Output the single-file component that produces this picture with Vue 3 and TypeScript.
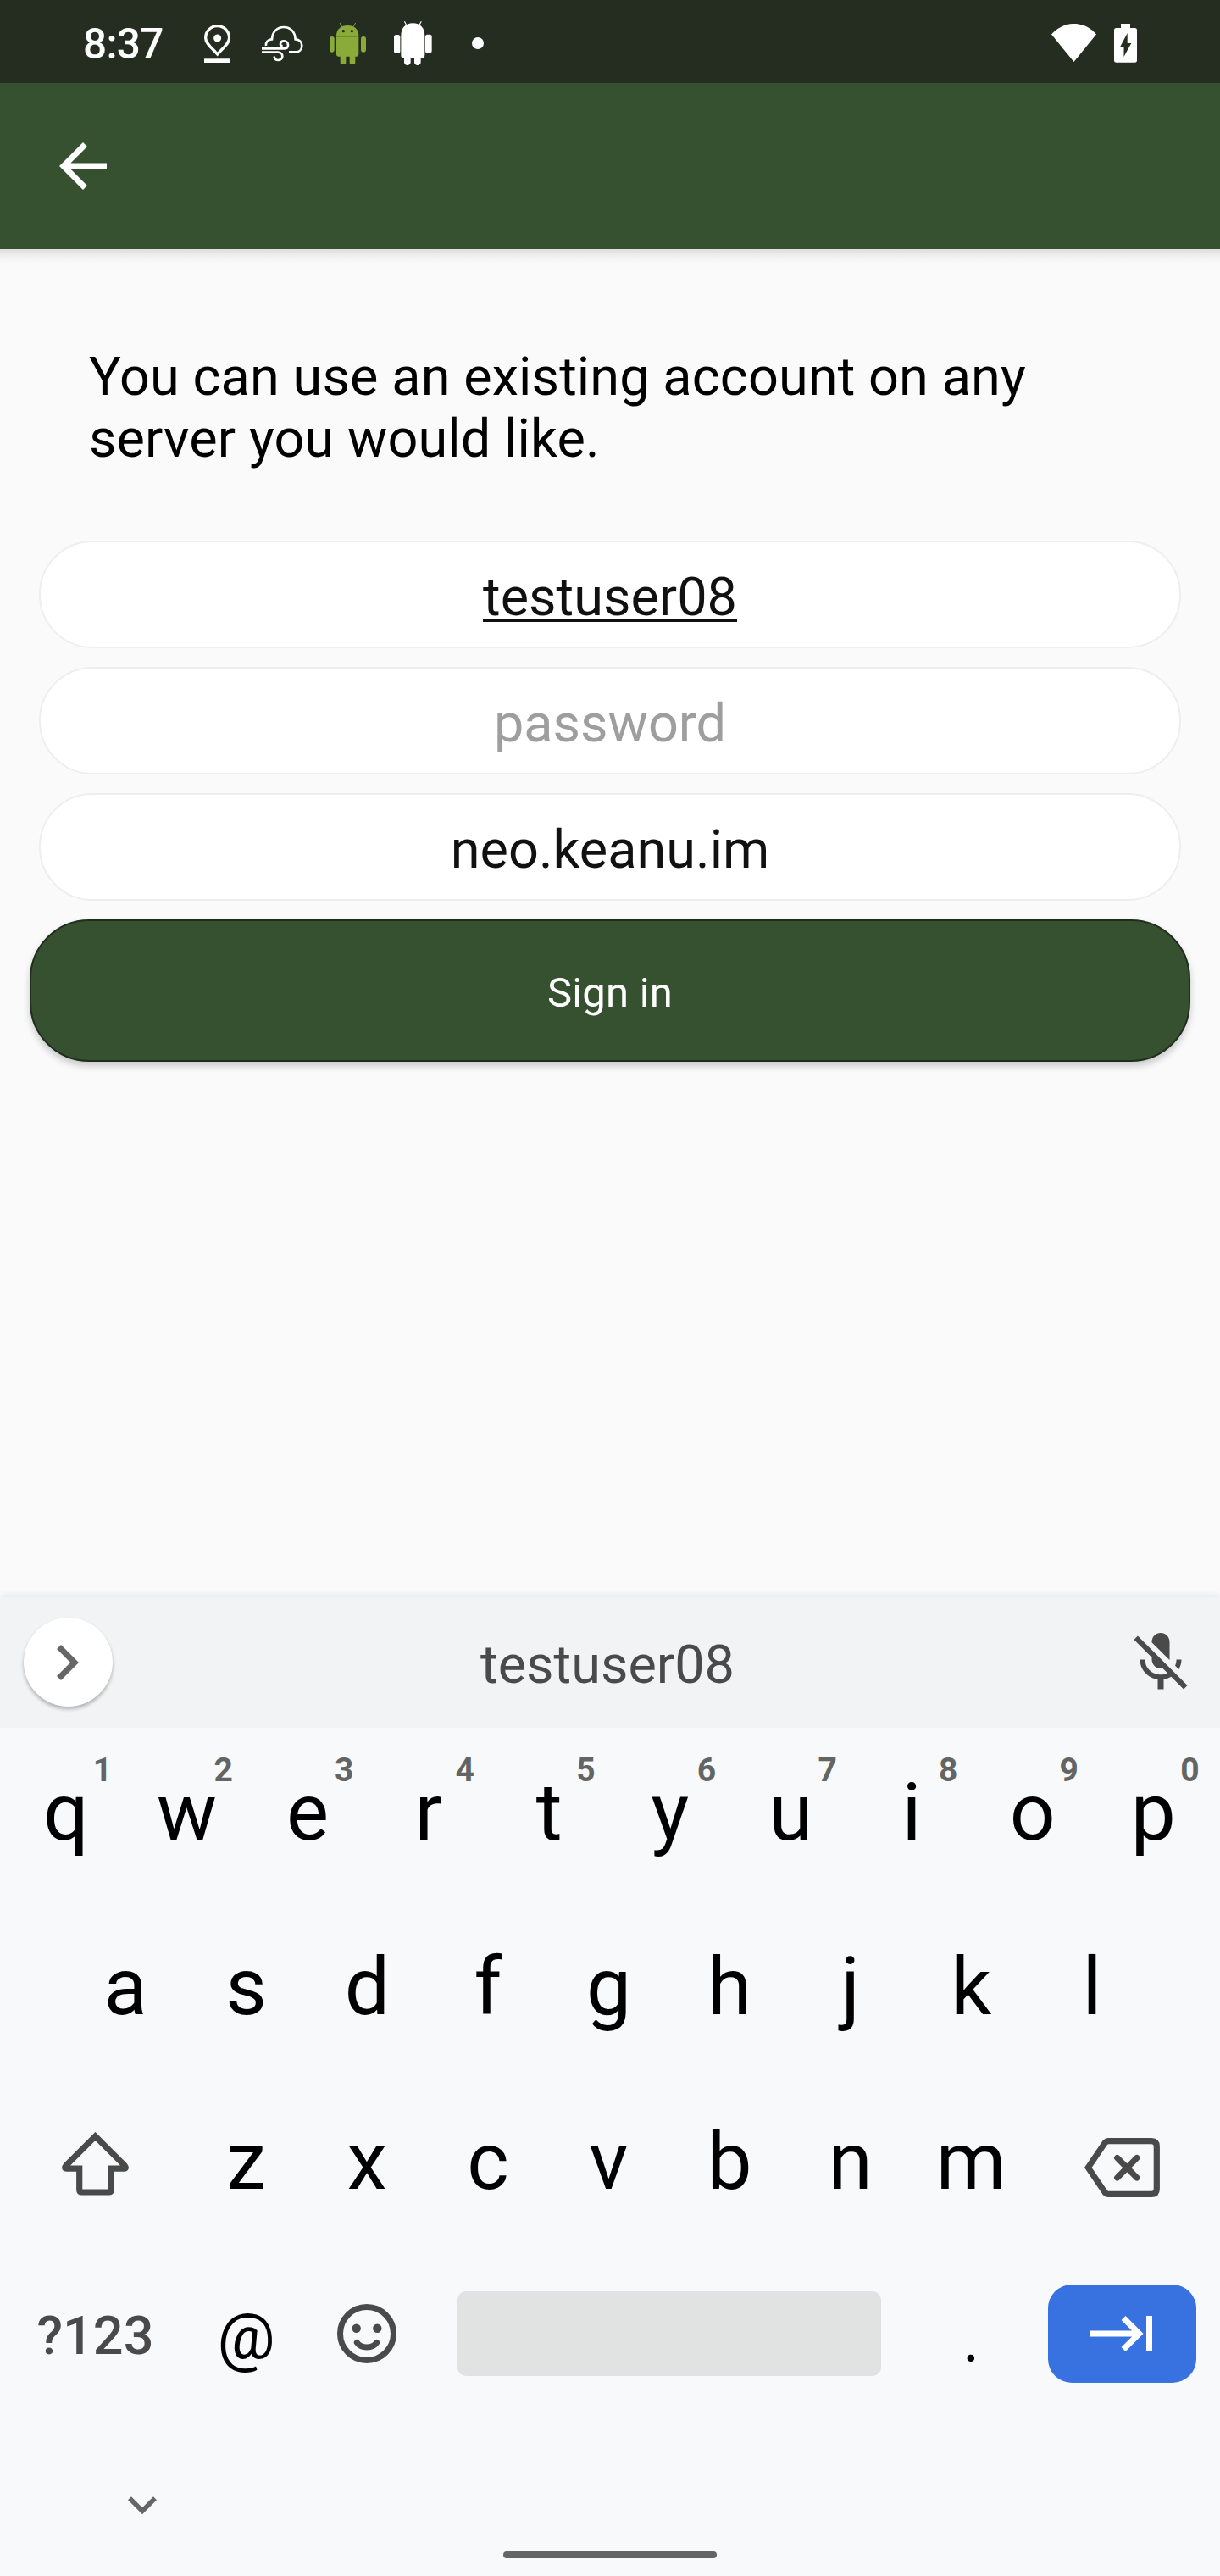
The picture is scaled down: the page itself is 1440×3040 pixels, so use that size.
<script setup lang="ts">
interface Field {
  text: string
  kind: 'composing' | 'hint' | 'filled'
}

interface Key {
  label: string
  hint?: string
}

const fields: Field[] = [
  { text: 'testuser08', kind: 'composing' },
  { text: 'password', kind: 'hint' },
  { text: 'neo.keanu.im', kind: 'filled' },
]

const topRow: Key[] = [...'qwertyuiop'].map((label, i) => ({ label, hint: String((i + 1) % 10) }))
const homeRow: Key[] = [...'asdfghjkl'].map((label) => ({ label }))
const bottomRow: Key[] = [...'zxcvbnm'].map((label) => ({ label }))
</script>

<template>
  <div class="screen">
    <header class="status">
      <span class="clock">8:37</span>
      <svg class="pin" viewBox="62 56 94 135">
        <path d="M109 161C91 140 67 124 67 103a42 42 0 0 1 84 0c0 21-24 37-42 58z" fill="none" stroke="#fff" stroke-width="10" />
        <circle cx="109" cy="104" r="13.5" fill="#fff" />
        <path d="M62 177h94v14H62z" fill="#fff" />
      </svg>
      <svg class="cloud" viewBox="267 60 148 128" fill="none" stroke="#fff" stroke-width="8">
        <path d="M282 132c-2-12 6-22 21-23C304 83 321 66 345 66s40 17 41 43c15 1 23 11 23 22 0 13-8 23-21 23h-25" />
        <path d="M267 142h81c8 0 12-6 12-13 0-8-6-14-14-14s-13 5-13 12c0 4 3 6 8 6" />
        <path d="M267 155h57c10 0 16 6 16 14s-7 14-15 14c-9 0-13-5-14-13" />
      </svg>
      <svg class="droid" viewBox="507 47 129 152" fill="#8aab39">
        <path d="M543 50l8 14M599 50l-8 14" stroke="#8aab39" stroke-width="3" />
        <path d="M531 95c0-22 16-36 40-36s39 14 39 36z" />
        <path d="M531 99h79v62c0 5-3 8-8 8h-4v21c0 11-20 11-20 0v-21h-13v21c0 11-20 11-20 0v-21h-6c-5 0-8-3-8-8z" />
        <rect x="507" y="98" width="17" height="56" rx="8.5" />
        <rect x="618" y="98" width="18" height="56" rx="8.5" />
        <circle cx="556" cy="79" r="5" fill="#242d20" />
        <circle cx="586" cy="79" r="5" fill="#242d20" />
      </svg>
      <svg class="droid-solid" viewBox="736 45 134 157" fill="#fff">
        <path d="M773 46l8 14M833 46l-8 14" stroke="#fff" stroke-width="3.5" />
        <path d="M761 98c0-30 16-46 42-46s42 16 42 46v68c0 8-5 11-14 11v13c0 15-23 15-23 0v-13h-13v13c0 15-23 15-23 0v-13c-8 0-11-4-11-11z" />
        <rect x="736" y="93" width="22" height="66" rx="8" />
        <rect x="847" y="92" width="23" height="66" rx="8" />
      </svg>
      <i class="more" />
      <svg class="wifi" viewBox="0 0 53 45">
        <path d="M0 12.5C15-4.2 38-4.2 53 12.5L26.5 45z" fill="#fff" />
      </svg>
      <svg class="battery" viewBox="0 0 27 46">
        <path d="M8 0h11v5h5.500q2.500 0 2.500 2.500V43q0 2.700-2.500 2.700H2.500Q0 45.700 0 43V7.500Q0 5 2.500 5H8z" fill="#fff" />
        <path d="M15.700 11v12h4.600l-8.800 16V27.500H7z" fill="#242d20" />
      </svg>
    </header>

    <nav class="appbar">
      <svg class="icon84" viewBox="0 0 24 24" fill="#fff">
        <path d="M20 11H7.830l5.590-5.590L12 4l-8 8 8 8 1.410-1.410L7.830 13H20v-2z" />
      </svg>
    </nav>

    <main class="content">
      <p class="intro">You can use an existing account on any server you would like.</p>
      <div v-for="f in fields" :key="f.text" class="field" :class="f.kind">
        <span>{{ f.text }}</span>
      </div>
      <button class="signin">Sign in</button>
    </main>

    <section class="keyboard">
      <div class="strip">
        <span class="expand">
          <svg class="icon84" viewBox="0 0 24 24" fill="#666">
            <path d="M10 6L8.590 7.410 13.170 12l-4.580 4.590L10 18l6-6z" />
          </svg>
        </span>
        <span class="suggestion">testuser08</span>
        <svg class="icon84 mic" viewBox="0 0 24 24" fill="#4a4a4a">
          <path d="M19 11h-1.700c0 .74-.16 1.430-.43 2.050l1.230 1.230c.56-.98.9-2.090.9-3.280zm-4.020.17c0-.06.02-.11.02-.17V5c0-1.660-1.340-3-3-3S9 3.340 9 5v.18l5.980 5.990zM4.270 3L3 4.270l6.010 6.010V11c0 1.660 1.330 3 2.990 3 .22 0 .44-.03.65-.08l1.660 1.660c-.71.33-1.500.52-2.310.52-2.760 0-5.300-2.100-5.300-5.100H5c0 3.410 2.720 6.230 6 6.720V21h2v-3.280c.91-.13 1.770-.45 2.540-.9L19.730 21 21 19.730 4.270 3z" />
        </svg>
      </div>

      <div class="row top">
        <span v-for="k in topRow" :key="k.label" class="key">{{ k.label }}<sup class="digit">{{ k.hint }}</sup></span>
      </div>
      <div class="row">
        <span v-for="k in homeRow" :key="k.label" class="key">{{ k.label }}</span>
      </div>
      <div class="row">
        <span class="wide">
          <svg class="shift" viewBox="0 0 79 75" fill="none" stroke="#4a4a4a" stroke-width="7.200">
            <path d="M39.500 5L5 39.500Q2 43.200 6 43.200H20.700V68Q20.700 71 23.700 71H55.300Q58.300 71 58.300 68V43.200H73Q77 43.200 74 39.500z" />
          </svg>
        </span>
        <span v-for="k in bottomRow" :key="k.label" class="key">{{ k.label }}</span>
        <span class="wide">
          <svg class="erase" viewBox="0 0 89 70" fill="none" stroke="#4a4a4a" stroke-width="7.200">
            <path d="M4.300 35L24 6Q25.800 3.600 28.500 3.600H79Q85.300 3.600 85.300 10V60Q85.300 66.400 79 66.400H28.500Q25.800 66.400 24 64z" />
            <path d="M38.700 23.500L61.900 47M61.900 23.500L38.700 47" stroke-linecap="round" />
          </svg>
        </span>
      </div>
      <div class="row last">
        <span class="wide symbols">?123</span>
        <span class="key at">@</span>
        <span class="key">
          <svg class="emoji" viewBox="0 0 70 70" fill="none" stroke="#4a4a4a" stroke-width="7">
            <circle cx="35" cy="35" r="31.500" />
            <path d="M23.300 45.500C28.500 52.800 41.500 52.800 46.700 45.500" stroke-linecap="round" />
            <circle cx="22.700" cy="28.700" r="5.200" fill="#4a4a4a" stroke="none" />
            <circle cx="47.300" cy="28.700" r="5.200" fill="#4a4a4a" stroke="none" />
          </svg>
        </span>
        <span class="space"><i /></span>
        <span class="key period">.</span>
        <span class="wide">
          <span class="next">
            <svg class="icon84" viewBox="0 0 24 24" fill="#fff">
              <path d="M11.590 7.410L15.170 11H1v2h14.170l-3.590 3.590L13 18l6-6-6-6-1.410 1.410zM20 6v12h2V6h-2z" />
            </svg>
          </span>
        </span>
      </div>

      <footer class="sysnav">
        <svg class="collapse" viewBox="0 0 24 24" fill="#666">
          <path d="M16.590 8.590L12 13.170 7.410 8.590 6 10l6 6 6-6z" />
        </svg>
        <i class="handle" />
      </footer>
    </section>
  </div>
</template>

<style>
body {
  margin: 0;
}
</style>

<style scoped>
.screen {
  width: 1440px;
  height: 3040px;
  display: flex;
  flex-direction: column;
  overflow: hidden;
  background: #fafafa;
  font-family: Roboto, "Liberation Sans", sans-serif;
  color: #000;
}
svg {
  display: block;
  flex: none;
}
.icon84 {
  width: 84px;
  height: 84px;
}
.status {
  height: 98px;
  flex: none;
  display: flex;
  align-items: flex-start;
  background: #242d20;
}
.clock {
  width: 142.700px;
  box-sizing: border-box;
  margin-left: 98px;
  padding-top: 24px;
  font-size: 49.500px;
  line-height: 57px;
  font-weight: 500;
  color: #fff;
  letter-spacing: -0.700px;
}
.pin {
  width: 31.300px;
  height: 45px;
  margin-top: 28.700px;
}
.cloud {
  width: 49.300px;
  height: 42.700px;
  margin: 30px 0 0 37px;
}
.droid {
  width: 43px;
  height: 50.700px;
  margin: 25.700px 0 0 30.700px;
}
.droid-solid {
  width: 44.700px;
  height: 52.300px;
  margin: 25px 0 0 33.300px;
}
.more {
  width: 14px;
  height: 14px;
  border-radius: 50%;
  background: #fff;
  margin: 44px 0 0 47px;
}
.wifi {
  width: 53px;
  height: 45px;
  margin: 28px 0 0 auto;
}
.battery {
  width: 27px;
  height: 46px;
  margin: 28px 98px 0 21px;
}
.appbar {
  height: 196px;
  flex: none;
  box-sizing: border-box;
  padding: 56px;
  background: #365130;
}
.content {
  flex: 1;
  display: flex;
  flex-direction: column;
  gap: 22px;
  padding: 0 35px;
  background: linear-gradient(#dedede, #f0f0f0 8px, #fafafa 17px);
}
.intro {
  margin: 114px 0 62px;
  padding: 0 70px;
  font-size: 63px;
  line-height: 73px;
  letter-spacing: 0.100px;
}
.field {
  height: 127px;
  flex: none;
  box-sizing: border-box;
  margin: 0 11px;
  border: 2px solid #eee;
  border-radius: 63px;
  background: #fff;
  color: #111;
  font-size: 63px;
  line-height: 129px;
  text-align: center;
}
.field.hint {
  color: #9e9e9e;
}
.field.composing span {
  text-decoration: underline;
  text-decoration-thickness: 3.500px;
  text-underline-offset: 4px;
  text-decoration-skip-ink: none;
}
.signin {
  height: 168px;
  flex: none;
  padding: 4px 0 0;
  border: 2px solid #232d1f;
  border-radius: 70px;
  background: #365130;
  color: #fff;
  font-family: inherit;
  font-size: 49px;
  letter-spacing: 0.200px;
  box-shadow: 0 5px 8px rgba(0, 0, 0, 0.2);
}
.keyboard {
  height: 1155px;
  flex: none;
  display: flex;
  flex-direction: column;
  background: #f8f9fb;
  box-shadow: 0 -3px 7px rgba(0, 0, 0, 0.07);
}
.strip {
  height: 154px;
  flex: none;
  display: flex;
  align-items: center;
  background: #f1f3f5;
}
.expand {
  width: 105px;
  height: 105px;
  flex: none;
  display: flex;
  align-items: center;
  justify-content: center;
  box-sizing: border-box;
  padding-right: 3px;
  margin: -1px 0 0 28px;
  border-radius: 50%;
  background: #fff;
  box-shadow: 0 3px 4px rgba(0, 0, 0, 0.28);
}
.suggestion {
  flex: 1;
  padding: 6px 27px 0 0;
  font-size: 63px;
  line-height: 74px;
  text-align: center;
  color: #4a4a4a;
}
.mic {
  margin: -1px 28px 0 0;
}
.row {
  width: 1437px;
  height: 206px;
  flex: none;
  display: flex;
  justify-content: center;
}
.row.top {
  width: 1439px;
}
.key {
  position: relative;
  width: 142.600px;
  flex: none;
  font-size: 94.500px;
  line-height: 200px;
  text-align: center;
}
.digit {
  position: absolute;
  left: 94.500px;
  top: 27px;
  width: 40px;
  font-size: 39px;
  line-height: 46px;
  font-weight: 700;
  text-align: center;
  color: #636564;
}
.wide {
  width: 213.900px;
  flex: none;
}
.shift {
  width: 79px;
  height: 75px;
  margin: 65px auto 0;
}
.erase {
  width: 89px;
  height: 70px;
  margin: 71.600px auto 0;
}
.symbols {
  font-size: 63px;
  line-height: 200px;
  font-weight: 500;
  text-align: center;
  color: #4a4a4a;
}
.at {
  font-size: 76px;
  line-height: 200px;
}
.period {
  font-size: 76px;
  line-height: 206px;
}
.emoji {
  width: 70px;
  height: 70px;
  margin: 62px auto 0;
}
.space {
  width: 570.400px;
  flex: none;
  box-sizing: border-box;
  padding: 47px 35px;
}
.space i {
  display: block;
  height: 100px;
  border-radius: 10px;
  background: #e1e3e2;
}
.next {
  width: 175px;
  height: 116px;
  display: flex;
  align-items: center;
  justify-content: center;
  margin: 39px auto 0;
  border-radius: 28px;
  background: #3872e0;
}
.sysnav {
  flex: 1;
  display: flex;
  flex-direction: column;
}
.collapse {
  width: 68px;
  height: 68px;
  margin: 59px 0 0 134px;
}
.handle {
  width: 252px;
  height: 8px;
  margin: 21px auto 0;
  border-radius: 4px;
  background: #646665;
}
</style>
